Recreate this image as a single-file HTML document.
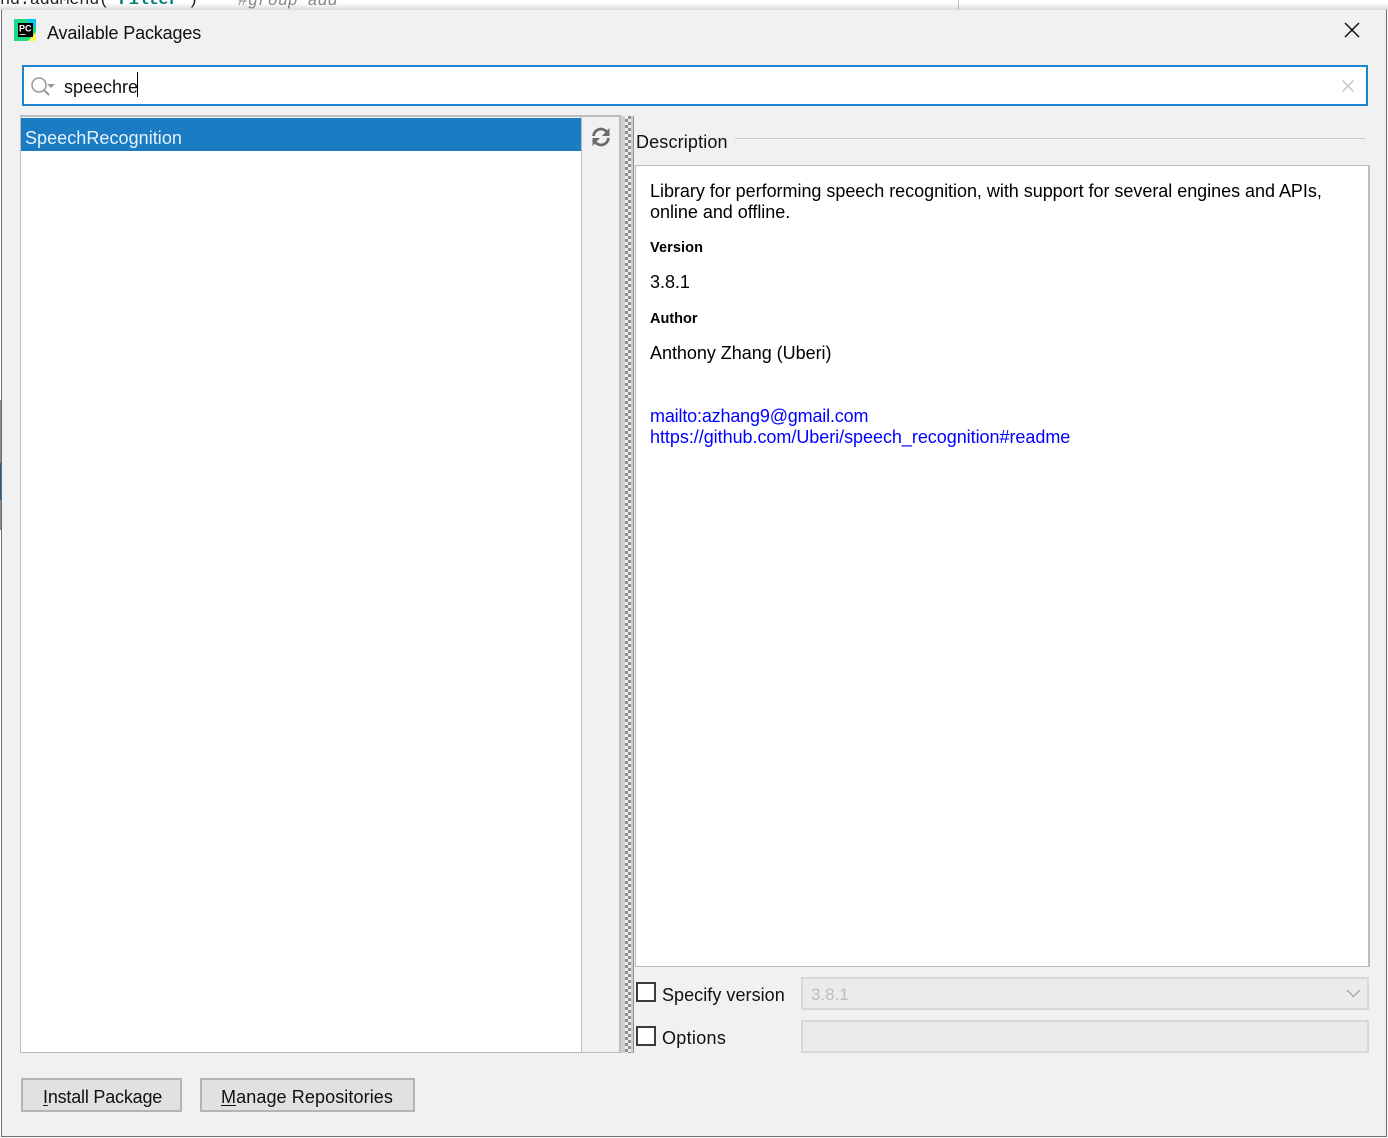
<!DOCTYPE html>
<html><head><meta charset="utf-8"><style>
html,body{margin:0;padding:0;width:1388px;height:1138px;overflow:hidden;background:#fff;font-family:"Liberation Sans",sans-serif;}
div,span,a{position:absolute;white-space:nowrap;}
svg{position:absolute;}
.u{position:absolute;color:#111;font-size:18px;line-height:22px;}
.a{color:#000;font-size:18px;line-height:21px;left:650px;letter-spacing:-.03px;}
.b{color:#000;font-size:14.5px;font-weight:bold;line-height:18px;left:650px;}
.l{color:#0000ff;text-decoration:none;font-size:18px;line-height:21px;left:650px;letter-spacing:-.1px;}
.cb{left:636px;width:16px;height:16px;border:2px solid #3c3c3c;background:#fff;}
.btn{background:#e1e1e1;border:2px solid #b4b4b4;box-sizing:border-box;}
u{text-decoration:underline;text-underline-offset:2px;}
</style></head><body>
<div style="left:0;top:-9px;font-family:'Liberation Mono',monospace;font-size:17px;letter-spacing:-.3px;line-height:20px;color:#222;">nd.addMenu(<span style="position:static;color:#067d7d;font-weight:bold;">'Filter'</span>)</div>
<div style="left:238px;top:-9px;font-size:16.6px;font-style:italic;line-height:20px;color:#888;font-family:'Liberation Mono',monospace;">#group add</div>
<div style="left:958px;top:0;width:1px;height:9px;background:#c8c8c8;"></div>
<div style="left:0;top:3px;width:1388px;height:6px;background:linear-gradient(rgba(0,0,0,0),rgba(0,0,0,.12));"></div>
<div style="left:0;top:400px;width:2px;height:130px;background:#8a8a8a;"></div>
<div style="left:0;top:463px;width:2px;height:37px;background:#1a5f9e;"></div>

<div style="left:1px;top:9px;width:1384px;height:1126px;background:#f1f1f1;border:1px solid #6e6e6e;border-top:1px solid #dcdcdc;"></div>

<svg style="left:14px;top:19px" width="22" height="22" viewBox="0 0 22 22">
<rect width="22" height="22" fill="#21d789"/><polygon points="12,0 22,0 22,9" fill="#07c3f2"/><polygon points="14,22 22,22 22,13" fill="#fcf84a"/>
<rect x="4" y="4" width="15" height="14" fill="#000"/>
<text x="5" y="12.5" font-family="Liberation Sans" font-size="9" font-weight="bold" fill="#fff">PC</text>
<rect x="5.5" y="15" width="6" height="1" fill="#ccc"/></svg>
<div class="u" style="left:47px;letter-spacing:-.15px;top:22px;">Available Packages</div>
<svg style="left:1344px;top:22px" width="16" height="16" viewBox="0 0 16 16"><path d="M1 1L15 15M15 1L1 15" stroke="#111" stroke-width="1.5" fill="none"/></svg>

<div style="left:22px;top:65px;width:1342px;height:37px;background:#fff;border:2px solid #1f83d0;"></div>
<svg style="left:30px;top:76px" width="26" height="20" viewBox="0 0 26 20"><circle cx="9" cy="9" r="7" stroke="#999" stroke-width="1.5" fill="none"/><path d="M14 14L19 19" stroke="#999" stroke-width="2"/><path d="M17 8H25L21 12Z" fill="#999"/></svg>
<div class="u" style="left:64px;top:76px;">speechre</div>
<div style="left:137px;top:72px;width:1px;height:25px;background:#000;"></div>
<svg style="left:1342px;top:80px" width="12" height="12" viewBox="0 0 12 12"><path d="M0.5 0.5L11.5 11.5M11.5 0.5L0.5 11.5" stroke="#c4c4c4" stroke-width="1.4" fill="none"/></svg>

<div style="left:20px;top:115px;width:598px;height:935px;border:1px solid #bcbcbc;border-top:2px solid #bcbcbc;border-right:2px solid #bcbcbc;background:#f1f1f1;"></div>
<div style="left:21px;top:118px;width:560px;height:934px;background:#fff;"></div>
<div style="left:581px;top:117px;width:1px;height:935px;background:#bcbcbc;"></div>
<div style="left:21px;top:118px;width:560px;height:33px;background:#1b7cc4;"></div>
<div class="u" style="left:25px;top:127px;color:#e6f2fb;letter-spacing:.05px;">SpeechRecognition</div>
<svg style="left:591px;top:127px" width="20" height="20" viewBox="0 0 20 20"><path d="M2.5 9A7.5 7.5 0 0 1 15.5 4.5" stroke="#6b6b6b" stroke-width="2.8" fill="none"/><path d="M17.5 11A7.5 7.5 0 0 1 4.5 15.5" stroke="#6b6b6b" stroke-width="2.8" fill="none"/><path d="M18.5 1V9H11Z" fill="#6b6b6b"/><path d="M1.5 19V11H9Z" fill="#6b6b6b"/></svg>

<div style="left:621px;top:116px;width:12px;height:937px;background:#cfcfcf;"></div>
<div style="left:625px;top:116px;width:6px;height:937px;background-image:repeating-conic-gradient(#8e8e8e 0 25%,#efefef 0 50%);background-size:6px 6px;"></div>
<div style="left:633px;top:116px;width:1px;height:937px;background:#8f8f8f;"></div>

<div class="u" style="left:636px;top:131px;letter-spacing:.15px;">Description</div>
<div style="left:735px;top:138px;width:630px;height:1px;background:#c8c8c8;"></div>
<div style="left:635px;top:165px;width:732px;height:800px;background:#fff;border:1px solid #bcbcbc;border-right:2px solid #bcbcbc;"></div>
<div class="a" style="top:181px;">Library for performing speech recognition, with support for several engines and APIs,</div>
<div class="a" style="top:202px;">online and offline.</div>
<div class="b" style="top:239px;letter-spacing:.1px;">Version</div>
<div class="a" style="top:272px;">3.8.1</div>
<div class="b" style="top:310px;">Author</div>
<div class="a" style="top:343px;">Anthony Zhang (Uberi)</div>
<a class="l" style="top:406px;letter-spacing:-.17px;">mailto:azhang9@gmail.com</a>
<a class="l" style="top:427px;letter-spacing:-.04px;">https://github.com/Uberi/speech_recognition#readme</a>

<div class="cb" style="top:982px;"></div>
<div class="u" style="left:662px;top:984px;letter-spacing:.05px;">Specify version</div>
<div style="left:801px;top:977px;width:564px;height:29px;background:#ebebeb;border:2px solid #d8d8d8;"></div>
<div class="u" style="left:811px;top:984px;color:#bdbdbd;font-size:17px;">3.8.1</div>
<svg style="left:1346px;top:989px" width="15" height="9" viewBox="0 0 15 9"><path d="M1 1L7.5 7.5L14 1" stroke="#a8a8a8" stroke-width="1.4" fill="none"/></svg>
<div class="cb" style="top:1026px;"></div>
<div class="u" style="left:662px;top:1027px;letter-spacing:.3px;">Options</div>
<div style="left:801px;top:1020px;width:564px;height:29px;background:#ebebeb;border:2px solid #d8d8d8;"></div>

<div class="btn" style="left:21px;top:1078px;width:161px;height:34px;"></div>
<div class="u" style="left:43px;top:1086px;letter-spacing:-.2px;"><u>I</u>nstall Package</div>
<div class="btn" style="left:200px;top:1078px;width:215px;height:34px;"></div>
<div class="u" style="left:221px;top:1086px;letter-spacing:.1px;"><u>M</u>anage Repositories</div>
</body></html>
